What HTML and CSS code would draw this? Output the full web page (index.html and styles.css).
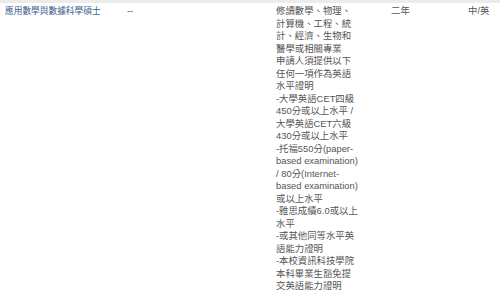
FILE: index.html
```html
<!DOCTYPE html>
<html lang="zh-Hant">
<head>
<meta charset="utf-8">
<link rel="stylesheet" href="styles.css">
</head>
<body>
<div class="topbar"></div>
<div class="row">
  <div class="cell c1 name">應用數學與數據科學碩士</div>
  <div class="cell c2">--</div>
  <div class="cell c3">修讀數學、物理、計算機、工程、統計、經濟、生物和醫學或相關專業<br>申請人須提供以下任何一項作為英語水平證明<br>-大學英語CET四級450分或以上水平 / 大學英語CET六級430分或以上水平<br>-托福550分(paper-based examination) / 80分(Internet-based examination)或以上水平<br>-雅思成績6.0或以上水平<br>-或其他同等水平英語能力證明<br>-本校資訊科技學院本科畢業生豁免提交英語能力證明</div>
  <div class="cell c4">二年</div>
  <div class="cell c5">中/英</div>
</div>
</body>
</html>
```
FILE: styles.css
```css
html, body {
  margin: 0;
  padding: 0;
  background: #ffffff;
}
body {
  font-family: "Liberation Sans", "Noto Sans CJK TC", sans-serif;
  font-size: 9.4px;
  line-height: 12.5px;
  color: #555555;
}
.topbar {
  height: 3px;
  background: #ececec;
}
.row {
  display: grid;
  grid-template-columns: 122px 149px 115px 77px auto;
  padding: 2px 0 0 5px;
}
.name {
  color: #3b5d8f;
  font-size: 8.7px;
}
.c3 {
  width: 84px;
}
```
